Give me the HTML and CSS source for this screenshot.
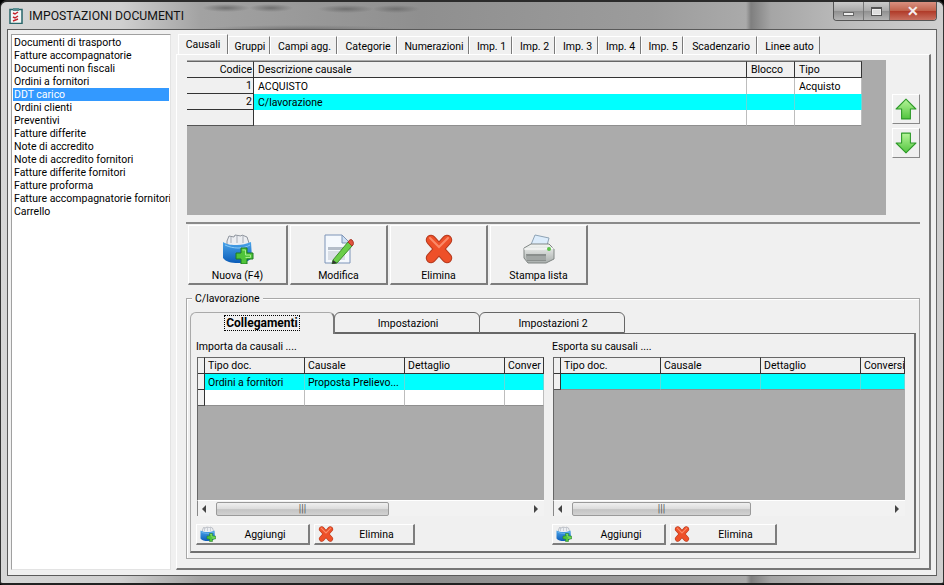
FILE: index.html
```html
<!DOCTYPE html>
<html lang="it">
<head>
<meta charset="utf-8">
<title>IMPOSTAZIONI DOCUMENTI</title>
<link rel="stylesheet" href="styles.css">
</head>
<body>
<svg class="defs" width="0" height="0" aria-hidden="true">
  <defs>
    <linearGradient id="bluebox" x1="0" y1="0" x2="0" y2="1"><stop offset="0" stop-color="#4aa4ea"/><stop offset="1" stop-color="#0b5cb8"/></linearGradient>
    <linearGradient id="greena" x1="0" y1="0" x2="0" y2="1"><stop offset="0" stop-color="#b6f59a"/><stop offset="1" stop-color="#52c43e"/></linearGradient>
    <linearGradient id="printer" x1="0" y1="0" x2="0" y2="1"><stop offset="0" stop-color="#f4f6f4"/><stop offset="1" stop-color="#a9aeac"/></linearGradient>
    <symbol id="i-new" viewBox="0 0 32 30">
      <path d="M5 7 7 2l5 1 1-2 6 1 1-1 5 2 1 3 2 6H5z" fill="#eceef2" stroke="#8f959e"/>
      <path d="M9 3v6M15 2v7M21 2v7" stroke="#a9aeb7"/>
      <path d="M1 8c5 3 9 3 14 3s9-1 14-3l1 16c-3 3-8 5-14 5-7 0-12-1-15-5z" fill="url(#bluebox)"/>
      <path d="M3 11c4 2 9 3 13 3s9-1 12-3" fill="none" stroke="#8bcaf5" stroke-width="1"/>
      <path d="M19 14h6v5h6v6h-6v5h-6v-5h-5v-6h5z" fill="#4fc43a" stroke="#1f7a22" stroke-width="1"/>
      <path d="M20.500 16h3v5h5v2.500h-5" fill="none" stroke="#a5ee8c"/>
    </symbol>
    <symbol id="i-edit" viewBox="0 0 30 30">
      <path d="M1 1h17l8 8v20H1z" fill="#f4f8fd" stroke="#7d94b8"/>
      <path d="M18 1v8h8z" fill="#cfe0f4" stroke="#7d94b8"/>
      <rect x="4" y="13" width="17" height="3" fill="#b4bdc9"/>
      <rect x="4" y="17" width="17" height="9" fill="#d9dee6"/>
      <path d="M9 26 24 8l4 4-15 17-5 1z" fill="#6bce4a" stroke="#3d8f2b"/>
      <path d="M24 8c1-2 3-3 4-2s2 3 1 5l-1 1z" fill="#e0533d" stroke="#a93526"/>
      <path d="M8 30l1-4 4 3z" fill="#333"/>
    </symbol>
    <symbol id="i-del" viewBox="0 0 30 30">
      <path d="M7 6 23 24M23 6 7 24" fill="none" stroke="#b63c20" stroke-width="10.500" stroke-linecap="round"/>
      <path d="M7 6 23 24M23 6 7 24" fill="none" stroke="#ee5029" stroke-width="8.500" stroke-linecap="round"/>
      <path d="M6 4 15 13 24 4" fill="none" stroke="#fb8a68" stroke-width="2" stroke-linecap="round"/>
    </symbol>
    <symbol id="i-print" viewBox="0 0 32 30">
      <path d="M7 13 12 1l14 3-3 11z" fill="#dcecfb" stroke="#8ea3b5"/>
      <path d="M1 14 8 10h18l5 5v10l-8 4H5L1 24z" fill="url(#printer)" stroke="#808684"/>
      <path d="M1 15h20l10-1" fill="none" stroke="#fff"/>
      <path d="M3 20h20v7H4z" fill="#8a8f8d"/>
      <path d="M4 23h19M4 25h19" stroke="#b8bdbb"/>
      <circle cx="26" cy="15" r="2" fill="#5cc24a"/>
    </symbol>
    <symbol id="i-up" viewBox="0 0 20 20">
      <path d="M10 1 19 10H14V19H6V10H1z" fill="url(#greena)" stroke="#2f9a2a" stroke-linejoin="round"/>
    </symbol>
    <symbol id="i-down" viewBox="0 0 20 20">
      <path d="M10 19 19 10H14V1H6V10H1z" fill="url(#greena)" stroke="#2f9a2a" stroke-linejoin="round"/>
    </symbol>
    <symbol id="i-doc" viewBox="0 0 14 16">
      <rect x="1" y="1.500" width="12" height="14" fill="#f3f7f6" stroke="#28656a" stroke-width="1.500"/>
      <rect x="4" y="0" width="6" height="3" fill="#5a8f92"/>
      <path d="M4 5l2 1 3-2M4 9l2 1 3-2M4 13l5-2" fill="none" stroke="#c4232a" stroke-width="1.500"/>
    </symbol>
  </defs>
</svg>
<div class="window">
  <header class="titlebar">
    <svg class="title-icon"><use href="#i-doc"/></svg>
    <span class="title-text">IMPOSTAZIONI DOCUMENTI</span>
    <div class="caption">
      <span class="cap cap-min"><i class="glyph-min"></i></span>
      <span class="cap cap-max"><i class="glyph-max"></i></span>
      <span class="cap cap-close">✕</span>
    </div>
  </header>
  <div class="client">
    <ul class="doclist">
      <li>Documenti di trasporto</li>
      <li>Fatture accompagnatorie</li>
      <li>Documenti non fiscali</li>
      <li>Ordini a fornitori</li>
      <li class="sel">DDT carico</li>
      <li>Ordini clienti</li>
      <li>Preventivi</li>
      <li>Fatture differite</li>
      <li>Note di accredito</li>
      <li>Note di accredito fornitori</li>
      <li>Fatture differite fornitori</li>
      <li>Fatture proforma</li>
      <li>Fatture accompagnatorie fornitori</li>
      <li>Carrello</li>
    </ul>
    <main class="main">
      <nav class="tabs">
        <span class="tab t1 on">Causali</span>
        <span class="tab t2">Gruppi</span>
        <span class="tab t3">Campi agg.</span>
        <span class="tab t4">Categorie</span>
        <span class="tab t5">Numerazioni</span>
        <span class="tab t6">Imp. 1</span>
        <span class="tab t6">Imp. 2</span>
        <span class="tab t6">Imp. 3</span>
        <span class="tab t6">Imp. 4</span>
        <span class="tab t7">Imp. 5</span>
        <span class="tab t8">Scadenzario</span>
        <span class="tab t9">Linee auto</span>
      </nav>
      <section class="pane">
        <div class="top-row">
          <div class="grid grid-top">
            <table class="tbl tbl-top">
              <colgroup><col class="c-code"><col class="c-desc"><col class="c-block"><col class="c-type"></colgroup>
              <thead><tr><th class="num">Codice</th><th>Descrizione causale</th><th>Blocco</th><th>Tipo</th></tr></thead>
              <tbody>
                <tr><th class="num">1</th><td>ACQUISTO</td><td></td><td>Acquisto</td></tr>
                <tr class="cur"><th class="num">2</th><td>C/lavorazione</td><td></td><td></td></tr>
                <tr><th class="num"></th><td></td><td></td><td></td></tr>
              </tbody>
            </table>
          </div>
          <div class="arrows">
            <span class="arrow"><svg class="arrow-icon"><use href="#i-up"/></svg></span>
            <span class="arrow"><svg class="arrow-icon"><use href="#i-down"/></svg></span>
          </div>
        </div>
        <div class="toolbar">
          <button class="tool tw1"><svg class="tool-icon"><use href="#i-new"/></svg><span>Nuova (F4)</span></button>
          <button class="tool tw2"><svg class="tool-icon"><use href="#i-edit"/></svg><span>Modifica</span></button>
          <button class="tool tw2"><svg class="tool-icon"><use href="#i-del"/></svg><span>Elimina</span></button>
          <button class="tool tw2"><svg class="tool-icon"><use href="#i-print"/></svg><span>Stampa lista</span></button>
        </div>
        <div class="group">
          <span class="legend">C/lavorazione</span>
          <div class="subtabs">
            <span class="subtab on"><b>Collegamenti</b></span>
            <span class="subtab">Impostazioni</span>
            <span class="subtab">Impostazioni 2</span>
          </div>
          <div class="subpane">
            <div class="col col-l">
              <div class="col-label">Importa da causali ....</div>
              <div class="grid grid-sub grid-l">
                <div class="grid-view">
                  <table class="tbl tbl-l">
                    <colgroup><col class="c-ind"><col class="c-a"><col class="c-a"><col class="c-a"><col class="c-end"></colgroup>
                    <thead><tr><th></th><th>Tipo doc.</th><th>Causale</th><th>Dettaglio</th><th>Conver</th></tr></thead>
                    <tbody>
                      <tr class="cur"><th></th><td>Ordini a fornitori</td><td>Proposta Prelievo...</td><td></td><td></td></tr>
                      <tr><th></th><td></td><td></td><td></td><td></td></tr>
                    </tbody>
                  </table>
                </div>
                <div class="hscroll">
                  <i class="sa sa-l"></i><span class="thumb thumb-l">|||</span><i class="sa sa-r"></i>
                </div>
              </div>
              <div class="actions">
                <button class="act aw1"><svg class="act-icon"><use href="#i-new"/></svg><span>Aggiungi</span></button>
                <button class="act aw2"><svg class="act-icon"><use href="#i-del"/></svg><span>Elimina</span></button>
              </div>
            </div>
            <div class="col col-r">
              <div class="col-label">Esporta su causali ....</div>
              <div class="grid grid-sub grid-r">
                <div class="grid-view">
                  <table class="tbl tbl-r">
                    <colgroup><col class="c-ind2"><col class="c-a"><col class="c-a"><col class="c-a"><col class="c-end2"></colgroup>
                    <thead><tr><th></th><th>Tipo doc.</th><th>Causale</th><th>Dettaglio</th><th>Conversi</th></tr></thead>
                    <tbody>
                      <tr class="cur"><th></th><td></td><td></td><td></td><td></td></tr>
                    </tbody>
                  </table>
                </div>
                <div class="hscroll">
                  <i class="sa sa-l"></i><span class="thumb thumb-r">|||</span><i class="sa sa-r"></i>
                </div>
              </div>
              <div class="actions">
                <button class="act aw1"><svg class="act-icon"><use href="#i-new"/></svg><span>Aggiungi</span></button>
                <button class="act aw3"><svg class="act-icon"><use href="#i-del"/></svg><span>Elimina</span></button>
              </div>
            </div>
          </div>
        </div>
      </section>
    </main>
  </div>
</div>
</body>
</html>
```
FILE: styles.css
```css
* { box-sizing: border-box; }
html, body { margin: 0; padding: 0; }
body {
  width: 944px;
  height: 585px;
  overflow: hidden;
  background: #000;
  font: 10.5px/13px Roboto, "Liberation Sans", Arial, sans-serif;
  color: #000;
}
.defs { position: absolute; }

.window {
  width: 944px;
  height: 585px;
  padding: 0 6px;
  border-top: 2px solid #2b2b2b;
  border-left: 1px solid #333;
  border-right: 1px solid #333;
  border-bottom: 2px solid #222;
  border-radius: 7px 7px 3px 3px;
  background:
    radial-gradient(ellipse 24px 4px at 225px 6px, #6f6f6f 0, transparent 100%),
    radial-gradient(ellipse 22px 4px at 270px 6px, #6f6f6f 0, transparent 100%),
    radial-gradient(ellipse 28px 4px at 345px 7px, #6f6f6f 0, transparent 100%),
    radial-gradient(ellipse 24px 4px at 395px 7px, #707070 0, transparent 100%),
    radial-gradient(ellipse 100px 4px at 300px 27px, #787878 0, transparent 100%),
    linear-gradient(90deg, #d6d6d6 0, #cfcfcf 120px, #a2a2a2 200px, #8f8f8f 420px, #9c9c9c 650px, #aaa 745px, #7f7f7f 750px, #a5a5a5 770px, #bdbdbd 850px, #cfcfcf 100%);
}

.titlebar {
  height: 27px;
  display: flex;
  align-items: center;
}
.title-icon { width: 14px; height: 16px; margin: 1px 0 0 2px; flex: none; }
.title-text { margin: 1px 0 0 6px; font-size: 12.2px; color: #111; }
.caption {
  display: flex;
  margin-left: auto;
  align-self: flex-start;
  height: 19px;
  border: 1px solid #555;
  border-top: 0;
  border-radius: 0 0 4px 4px;
  overflow: hidden;
}
.cap {
  display: flex;
  align-items: center;
  justify-content: center;
  height: 18px;
  background: linear-gradient(#cbcbcb, #a8a8a8 50%, #909090 51%, #b4b4b4);
}
.cap-min { width: 30px; border-right: 1px solid #777; }
.cap-max { width: 26px; border-right: 1px solid #777; }
.cap-close {
  width: 46px;
  color: #f5eeee;
  font-size: 14px;
  font-weight: bold;
  background: linear-gradient(#d99080, #c0604a 50%, #b03a28 51%, #c87060);
}
.glyph-min { width: 11px; height: 4px; margin-top: 5px; background: #eee; border: 1px solid #666; }
.glyph-max { width: 11px; height: 9px; background: #ddd; border: 1px solid #555; border-top-width: 2px; box-shadow: inset 0 0 0 1px #eee; }

.client {
  display: flex;
  width: 930px;
  height: 547px;
  padding: 4px 5px 0 3px;
  background: #f0f0f0;
  border: 1px solid #5a5a5a;
  border-right-color: #666;
}

.doclist {
  flex: none;
  width: 160px;
  height: 536px;
  margin: 0;
  padding: 1px 1px 0;
  list-style: none;
  background: #fff;
  border: 1px solid #a0a0a0;
  border-right-color: #e3e3e3;
  border-bottom-color: #e3e3e3;
  white-space: nowrap;
  overflow: hidden;
}
.doclist li { height: 13px; line-height: 14px; padding-left: 1px; }
.doclist .sel { background: #3399ff; color: #fff; }

.main { flex: none; width: 755px; margin-left: 5px; display: flex; flex-direction: column; }

.tabs { display: flex; height: 20px; padding-left: 2px; align-items: flex-end; }
.tab {
  height: 18px;
  padding: 3px 0 0 2px;
  text-align: center;
  background: #f0f0f0;
  border-top: 1px solid #fff;
  border-left: 1px solid #fff;
  border-right: 1px solid #7a7a7a;
  white-space: nowrap;
}
.tab.on { height: 20px; padding: 3px 0 0; }
.t1 { width: 50px; }
.t2 { width: 42px; }
.t3 { width: 67px; }
.t4 { width: 60px; }
.t5 { width: 72px; }
.t6 { width: 43px; }
.t7 { width: 42px; }
.t8 { width: 74px; }
.t9 { width: 63px; }

.pane {
  height: 516px;
  padding: 5px 9px 0 9px;
  border-top: 1px solid #fff;
  border-left: 1px solid #fff;
  border-right: 2px solid #777;
  border-bottom: 2px solid #777;
}

.top-row { display: flex; height: 155px; }
.grid { background: #ababab; }
.grid-top { flex: none; width: 699px; padding-top: 1px; margin-left: 1px; }
.arrows { margin-left: 6px; padding-top: 34px; display: flex; flex-direction: column; gap: 4px; }
.arrow {
  width: 28px;
  height: 30px;
  display: flex;
  align-items: center;
  justify-content: center;
  background: #f0f0f0;
  border: 1px solid #fff;
  border-right: 1px solid #888;
  border-bottom: 1px solid #888;
}
.arrow-icon { width: 22px; height: 24px; }

.tbl {
  table-layout: fixed;
  border-collapse: separate;
  border-spacing: 0;
  background: #fff;
  font: inherit;
}
.tbl th, .tbl td {
  height: 16px;
  padding: 0 3px;
  font-weight: normal;
  text-align: left;
  white-space: nowrap;
  overflow: hidden;
}
.tbl td { border-right: 1px solid #bdbdbd; }
.tbl th { background: #f0f0f0; border-right: 1px solid #333; border-bottom: 1px solid #333; }
.tbl thead th { height: 17px; border-top: 1px solid #666; }
.tbl-top th, .tbl-top td { padding-left: 4px; }
.tbl th.num { text-align: right; padding-right: 1px; }
.tbl .cur td { background: #00ffff; border-right-color: #5fdcdc; }
.tbl tbody tr:last-child td { border-bottom: 1px solid #8f8f8f; }
.tbl tbody tr:last-child th { border-bottom-color: #555; }
.tbl-top { width: 675px; }
.tbl-top tbody th { height: 16px; }
.c-code { width: 67px; }
.c-desc { width: 493px; }
.c-block { width: 48px; }
.c-type { width: 67px; }

.toolbar {
  display: flex;
  gap: 2px;
  height: 65px;
  margin-top: 7px;
  padding: 1px 0 0 2px;
  width: 734px;
  border-top: 2px solid #8a8a8a;
}
.tool {
  display: flex;
  flex-direction: column;
  align-items: center;
  height: 60px;
  padding: 8px 0 0;
  background: #f0f0f0;
  border: 1px solid #fff;
  border-right: 2px solid #7d7d7d;
  border-bottom: 2px solid #7d7d7d;
  font: inherit;
  color: #000;
}
.tool-icon { width: 32px; height: 30px; margin-bottom: 5px; }
.tw1 { width: 100px; }
.tw2 { width: 98px; }

.group {
  position: relative;
  width: 734px;
  height: 261px;
  margin-top: 11px;
  padding: 13px 3px 0;
  border: 1px solid #a8a8a8;
  box-shadow: inset 1px 1px 0 #fff;
}
.legend {
  position: absolute;
  top: -7px;
  left: 5px;
  padding: 0 3px;
  background: #f0f0f0;
}

.subtabs { display: flex; height: 21px; }
.subtab {
  width: 146px;
  margin-right: -1px;
  padding: 4px 0 0 2px;
  text-align: center;
  background: #f0f0f0;
  border: 1px solid #666;
  border-radius: 6px 6px 0 0;
}
.subtab.on {
  width: 145px;
  position: relative;
  z-index: 1;
  height: 22px;
  padding-left: 0;
  border-bottom: 0;
  border-color: #aaa;
  border-right: 2px solid #777;
}
.subtab b { padding: 0 1px; outline: 1px dotted #000; font-weight: bold; font-size: 12px; }

.subpane {
  display: flex;
  height: 220px;
  width: 726px;
  padding: 6px 0 0 5px;
  border-left: 1px solid #aaa;
  border-top: 1px solid #666;
  border-right: 2px solid #6f6f6f;
  border-bottom: 2px solid #6f6f6f;
}
.col { flex: none; display: flex; flex-direction: column; }
.col-l { width: 356px; }
.col-r { width: 362px; }
.col-label { height: 17px; }
.grid-sub { height: 159px; margin-left: 1px; display: flex; flex-direction: column; }
.grid-l { width: 347px; }
.grid-r { width: 352px; }
.grid-view { flex: 1; min-height: 0; overflow: hidden; border-left: 1px solid #666; }
.tbl-l { width: 346px; }
.tbl-r { width: 351px; }
.c-ind { width: 7px; }
.c-ind2 { width: 7px; }
.c-a { width: 100px; }
.c-end { width: 39px; }
.c-end2 { width: 44px; }
.tbl-l th:first-child, .tbl-r th:first-child { padding: 0; }

.hscroll {
  flex: none;
  display: flex;
  align-items: center;
  height: 16px;
  background: #f2f2f2;
  border-left: 1px solid #888;
  padding: 0 6px 0 4px;
  border-top: 1px solid #fff;
}
.sa { flex: none; width: 0; height: 0; border-top: 4px solid transparent; border-bottom: 4px solid transparent; }
.sa-l { border-right: 4px solid #444; margin-right: 10px; }
.sa-r { border-left: 4px solid #444; margin-left: auto; }
.thumb {
  flex: none;
  height: 14px;
  text-align: center;
  line-height: 12px;
  font-size: 10px;
  color: #555;
  background: linear-gradient(#f0f0f0, #dcdcdc 50%, #c4c4c4 55%, #d2d2d2);
  border: 1px solid #9a9a9a;
  border-radius: 2px;
}
.thumb-l { width: 173px; }
.thumb-r { width: 179px; }

.actions { display: flex; gap: 4px; margin-top: 8px; }
.act {
  display: flex;
  align-items: center;
  height: 21px;
  padding: 0 0 0 3px;
  background: #f0f0f0;
  border: 1px solid #fff;
  border-right: 2px solid #7d7d7d;
  border-bottom: 2px solid #7d7d7d;
  font: inherit;
  color: #000;
}
.act span { flex: 1; text-align: center; padding-left: 6px; }
.act-icon { width: 16px; height: 16px; flex: none; }
.aw1 { width: 114px; }
.aw2 { width: 101px; }
.aw3 { width: 107px; }
```
